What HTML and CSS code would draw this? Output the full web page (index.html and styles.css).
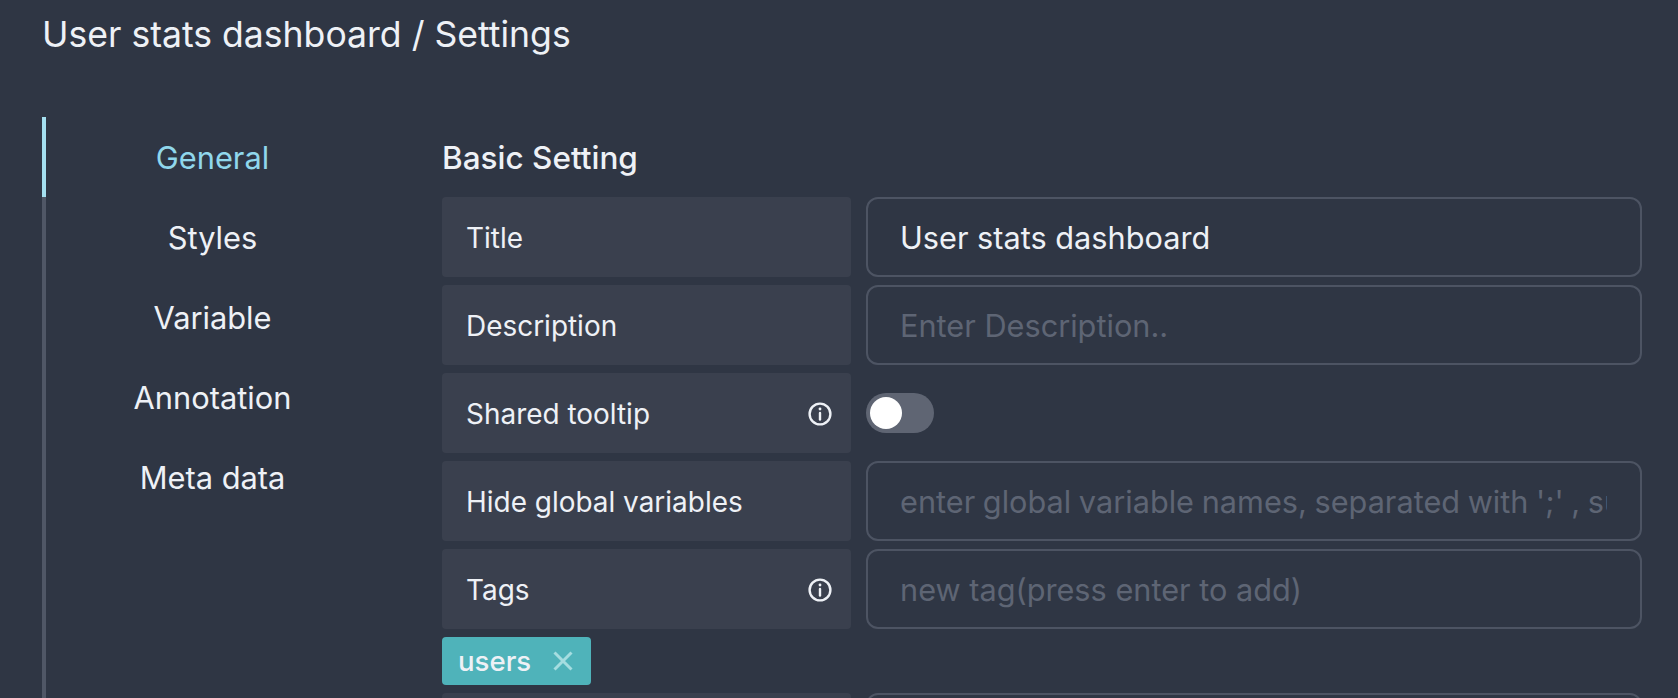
FILE: index.html
```html
<!DOCTYPE html>
<html lang="en">
<head>
<meta charset="utf-8">
<title>User stats dashboard / Settings</title>
<link rel="stylesheet" href="styles.css">
</head>
<body>
<div class="page">
  <h1 class="page-title">User stats dashboard / Settings</h1>
  <div class="layout">
    <nav class="side">
      <a class="side-item active">General</a>
      <a class="side-item">Styles</a>
      <a class="side-item">Variable</a>
      <a class="side-item">Annotation</a>
      <a class="side-item">Meta data</a>
    </nav>
    <main class="main">
      <h2 class="section-title">Basic Setting</h2>
      <div class="rows">
        <div class="row">
          <div class="label">Title</div>
          <input class="field" type="text" value="User stats dashboard">
        </div>
        <div class="row">
          <div class="label">Description</div>
          <input class="field" type="text" placeholder="Enter Description..">
        </div>
        <div class="row">
          <div class="label">Shared tooltip
            <svg class="info" viewBox="0 0 24 24" fill="none" stroke="currentColor" stroke-width="2.4" stroke-linecap="round"><circle cx="12" cy="12" r="10.4"/><path d="M12 11v6.5"/><path d="M12 6.8v.3" stroke-width="2.8"/></svg>
          </div>
          <div class="toggle-cell"><span class="toggle"><span class="knob"></span></span></div>
        </div>
        <div class="row">
          <div class="label">Hide global variables</div>
          <input class="field field-long" type="text" placeholder="enter global variable names, separated with ';' , such as var1;var2">
        </div>
        <div class="row">
          <div class="label">Tags
            <svg class="info" viewBox="0 0 24 24" fill="none" stroke="currentColor" stroke-width="2.4" stroke-linecap="round"><circle cx="12" cy="12" r="10.4"/><path d="M12 11v6.5"/><path d="M12 6.8v.3" stroke-width="2.8"/></svg>
          </div>
          <input class="field" type="text" placeholder="new tag(press enter to add)">
        </div>
        <div class="tags">
          <span class="tag">users
            <svg class="tag-x" viewBox="0 0 20 20" fill="none" stroke="currentColor" stroke-width="3"><path d="M1.5 1.5l17 17M18.5 1.5l-17 17"/></svg>
          </span>
        </div>
        <div class="row">
          <div class="label"></div>
          <input class="field" type="text">
        </div>
      </div>
    </main>
  </div>
</div>
</body>
</html>
```

FILE: styles.css
```css
* { box-sizing: border-box; }
html, body { margin: 0; height: 100%; }
body {
  background: #2f3644;
  color: #eef1f6;
  font-family: Inter, "Noto Sans", sans-serif;
  overflow: hidden;
}
.page { height: 698px; overflow: hidden; padding: 0 36px 0 42px; }
.page-title {
  margin: 0;
  height: 117px;
  padding-top: 13px;
  font-size: 35.6px;
  line-height: 44px;
  font-weight: 400;
}
.layout { display: flex; }
.side {
  flex: 0 0 400px;
  width: 400px;
  padding-right: 63px;
  height: 581px;
  border-left: 4px solid #505766;
}
.side-item {
  display: flex;
  align-items: center;
  justify-content: center;
  height: 80px;
  padding-top: 1px;
  font-size: 30.8px;
  margin-left: -4px;
  border-left: 4px solid transparent;
}
.side-item.active { color: #90d7ec; border-left-color: #a5e0f0; }
.main { flex: 1; min-width: 0; }
.section-title {
  margin: 0;
  height: 80px;
  display: flex;
  align-items: center;
  font-size: 31.5px;
  font-weight: 500;
}
.rows { display: flex; flex-direction: column; gap: 8px; }
.row { display: flex; gap: 15px; height: 80px; flex: none; }
.label {
  flex: 0 0 409px;
  display: flex;
  align-items: center;
  justify-content: space-between;
  padding: 1px 19px 0 24px;
  background: #3a404e;
  border-radius: 4px;
  font-size: 27.95px;
}
.field {
  flex: 1;
  min-width: 0;
  height: 80px;
  padding: 0 33px 0 32px;
  background: transparent;
  border: 2px solid #4d5463;
  border-radius: 12px;
  color: #eef1f6;
  font: inherit;
  font-size: 30.7px;
  outline: none;
}
.field-long { word-spacing: -1px; }
.field::placeholder { color: #5e6574; opacity: 1; }
.info { width: 24px; height: 24px; flex: none; }
.toggle-cell { flex: 1; display: flex; align-items: center; }
.toggle {
  display: flex;
  align-items: center;
  width: 68px;
  height: 40px;
  padding: 4px;
  border-radius: 20px;
  background: #5f6573;
}
.knob { width: 32px; height: 32px; border-radius: 50%; background: #fff; }
.tags { display: flex; }
.tag {
  display: flex;
  align-items: center;
  justify-content: space-between;
  width: 149px;
  height: 48px;
  padding: 0 18px 0 16px;
  background: #4fb3ba;
  border-radius: 4px;
  font-size: 27.6px;
  font-weight: 500;
}
.tag-x { width: 20px; height: 20px; color: #a5dde0; }
```
